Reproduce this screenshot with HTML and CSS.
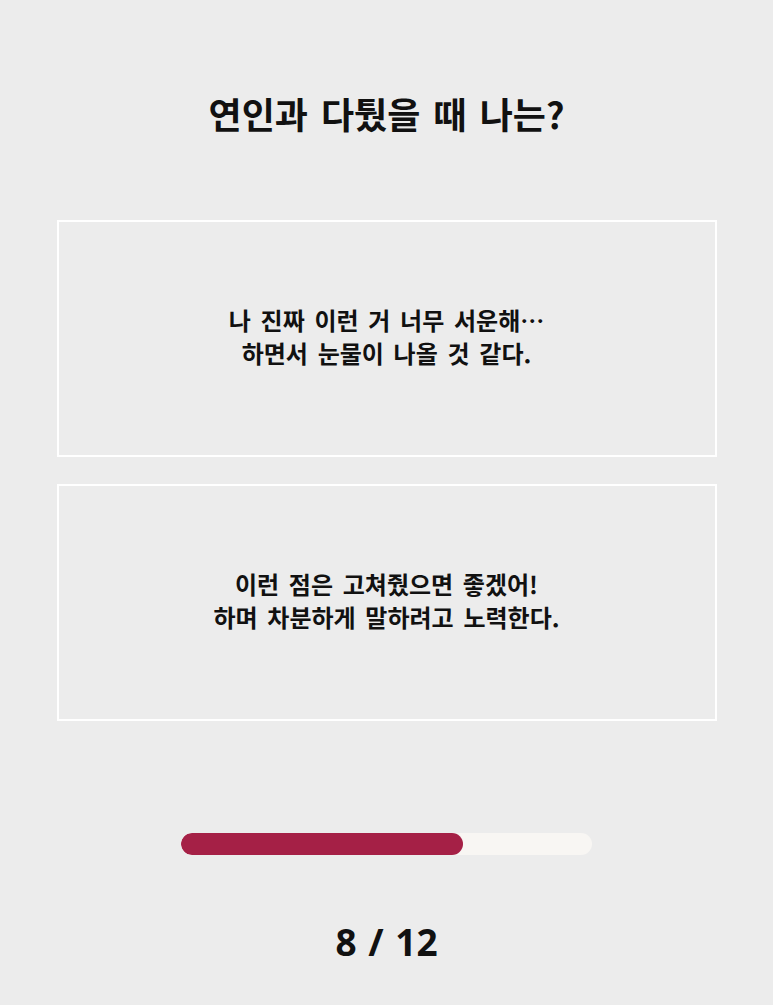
FILE: index.html
```html
<!DOCTYPE html>
<html lang="ko">
<head>
    <meta charset="UTF-8">
    <meta name="viewport" content="width=device-width, initial-scale=1.0">
    <title>연애 유형 테스트</title>
    <link rel="stylesheet" href="styles.css">
</head>
<body>
<div class="quiz">
    <h2 class="question">연인과 다퉜을 때 나는?</h2>

    <div class="answers">
        <button class="answer">나 진짜 이런 거 너무 서운해…<br>하면서 눈물이 나올 것 같다.</button>
        <button class="answer">이런 점은 고쳐줬으면 좋겠어!<br>하며 차분하게 말하려고 노력한다.</button>
    </div>

    <div class="progress">
        <div class="progress-bar" style="width: 68.5%;"></div>
    </div>

    <div class="counter">8 / 12</div>
</div>
</body>
</html>
```

FILE: styles.css
```css
body {
    margin: 0;
    font-family: "Noto Sans CJK KR", "Noto Sans", sans-serif;
    background-color: #ececec;
    color: #111;
}

.quiz {
    width: 660px;
    margin: 0 auto;
    padding-top: 89px;
    display: flex;
    flex-direction: column;
    align-items: center;
}

.question {
    margin: 0;
    font-size: 36px;
    font-weight: bold;
    line-height: 48px;
    word-spacing: 3px;
}

.answers {
    width: 100%;
    margin-top: 83px;
    display: flex;
    flex-direction: column;
    gap: 27px;
}

.answer {
    height: 237px;
    padding: 0 6px 6px;
    background: transparent;
    border: 2px solid #fff;
    font-family: inherit;
    font-size: 24px;
    font-weight: bold;
    line-height: 33px;
    word-spacing: 3px;
    color: #111;
    cursor: pointer;
}

.progress {
    width: 411px;
    height: 22px;
    margin-top: 112px;
    background: #f8f6f3;
    border-radius: 11px;
    overflow: hidden;
}

.progress-bar {
    height: 100%;
    background: #a52046;
    border-radius: 11px;
}

.counter {
    margin-top: 61px;
    font-family: "Noto Sans", sans-serif;
    font-size: 37px;
    font-weight: bold;
    word-spacing: 2px;
}
```
